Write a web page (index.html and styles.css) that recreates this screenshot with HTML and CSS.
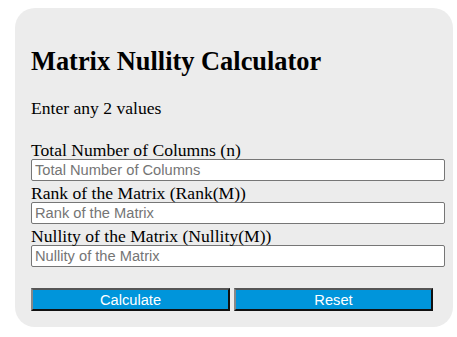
FILE: index.html
```
<!DOCTYPE html>
<html lang="en">
<head>
  <meta charset="UTF-8" />
  <meta name="viewport" content="width=device-width, initial-scale=1.0"/>
  <title>Matrix Nullity Calculator</title>
  <link rel="stylesheet" href="styles.css">
</head>
<body>
  <div class="calculator">
    <h1>Matrix Nullity Calculator</h1>
    <p class="hint">Enter any 2 values</p>

    <label for="columns">Total Number of Columns (n)</label>
    <input type="text" id="columns" placeholder="Total Number of Columns" />

    <label for="rank">Rank of the Matrix (Rank(M))</label>
    <input type="text" id="rank" placeholder="Rank of the Matrix" />

    <label for="nullity">Nullity of the Matrix (Nullity(M))</label>
    <input type="text" id="nullity" placeholder="Nullity of the Matrix" />

    <div class="buttons">
      <button type="button">Calculate</button>
      <button type="button">Reset</button>
    </div>
  </div>
</body>
</html>
```

FILE: styles.css
```
body {
  font-family: "Liberation Serif", "Times New Roman", serif;
  font-size: 17.6px;
  background: #fff;
  margin: 0;
  padding: 8px 0 0 15px;
}
.calculator {
  background: #ececec;
  border-radius: 20px;
  padding: 16px;
  width: 406px;
}
h1 {
  font-size: 26.4px;
  margin: 23px 0 0;
  line-height: 29px;
}
.hint {
  margin: 23px 0 0;
  line-height: 18px;
}
label {
  display: block;
  line-height: 18px;
}
.hint + label {
  margin-top: 24px;
}
input {
  display: block;
  width: 100%;
  font-family: "Liberation Sans", Arial, sans-serif;
  font-size: 14.67px;
  line-height: 16px;
  padding: 2px 3px;
  margin: 0 0 3px;
  border: 1px solid #767676;
  border-radius: 2px;
  background: #fff;
}
input::placeholder {
  color: #757575;
}
.buttons {
  margin-top: 21px;
  display: flex;
  gap: 4px;
}
button {
  width: 199px;
  height: 23px;
  padding: 0;
  background: #0095db;
  color: #fff;
  font-family: "Liberation Sans", Arial, sans-serif;
  font-size: 14.67px;
  border: 2px solid;
  border-color: #555 #111 #111 #888;
}
```
